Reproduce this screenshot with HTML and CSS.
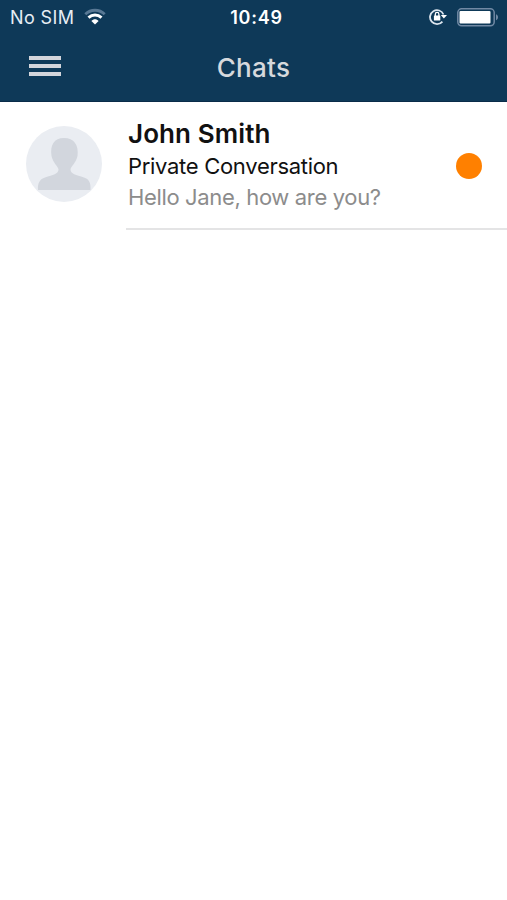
FILE: index.html
```html
<!DOCTYPE html>
<html lang="en">
<head>
  <meta charset="UTF-8">
  <meta name="viewport" content="width=device-width, initial-scale=1.0">
  <title>Chats</title>
  <link rel="stylesheet" href="styles.css">
</head>
<body>
  <header class="header">
    <!-- Status bar -->
    <div class="status-bar">
      <div class="status-left">
        <span class="carrier">No SIM</span>
        <svg class="wifi" width="22" height="18" viewBox="0 0 22 18" fill="none">
          <path d="M1.3 6.2C6.8 .9 15.2 .9 20.7 6.2" stroke="#587894" stroke-width="2.8"/>
          <path d="M4.5 9.6C8.3 6.2 13.7 6.2 17.5 9.6" stroke="#fff" stroke-width="3"/>
          <path d="M7.4 12.9C9.5 10.7 12.5 10.7 14.6 12.9L11 16.6Z" fill="#fff"/>
        </svg>
      </div>
      <span class="time">10:49</span>
      <div class="status-right">
        <svg width="18" height="18" viewBox="0 0 18 18" fill="none">
          <path d="M13.4 13.6A7 7 0 1 1 14.5 6.5" stroke="#dce5ee" stroke-width="1.8"/>
          <path d="M11.8 7H18L14.9 10.5Z" fill="#fff"/>
          <rect x="4.9" y="7.4" width="6.4" height="5.2" rx=".6" fill="#fff"/>
          <path d="M6.3 8V6.2a1.8 1.8 0 0 1 3.6 0V8" stroke="#fff" stroke-width="1.3"/>
        </svg>
        <svg width="42" height="19" viewBox="0 0 42 19" fill="none">
          <rect x=".8" y=".8" width="36.4" height="17" rx="3.8" stroke="#7189a4" stroke-width="1.5"/>
          <rect x="2.5" y="3" width="31" height="12.5" rx="1" fill="#fff"/>
          <path d="M39 6.3c2.7.7 2.700 5.300 0 6Z" fill="#7189a4"/>
        </svg>
      </div>
    </div>

    <!-- Navigation bar -->
    <nav class="navbar">
      <button class="menu-btn" aria-label="Menu">
        <span></span>
        <span></span>
        <span></span>
      </button>
      <h1>Chats</h1>
    </nav>
  </header>

  <main class="chat-list">
    <div class="chat">
      <svg class="avatar" width="76" height="76" viewBox="0 0 76 76">
        <circle cx="38" cy="38" r="38" fill="#eaedf2"/>
        <path d="M12 64C11.500 57 14 53 19 51.500C27 49 32.500 48 32.500 43.500C32 40 27.500 38 25.500 30C24 19 28 12 38 12C48 12 53 19 51.500 30C49.500 38 45 40 44.500 43.500C44.500 48 50 49 58 51.500C63 53 65 57 64.500 64Z" fill="#d2d6dd"/>
      </svg>
      <div class="chat-body">
        <div class="chat-text">
          <h2>John Smith</h2>
          <p class="type">Private Conversation</p>
          <p class="message">Hello Jane, how are you?</p>
        </div>
        <span class="unread"></span>
      </div>
    </div>
  </main>
</body>
</html>
```
FILE: styles.css
```css
* {
  box-sizing: border-box;
}

body {
  margin: 0;
  font-family: Inter, "Liberation Sans", sans-serif;
  background: #fff;
  color: #111;
}

h1, h2, p {
  margin: 0;
  white-space: nowrap;
}

.header {
  height: 102px;
  background: #0e3958;
  border-bottom: 1px solid #092b49;
}

.status-bar {
  display: grid;
  grid-template-columns: 1fr auto 1fr;
  align-items: center;
  height: 34px;
  padding: 0 8px 0 10px;
  color: #fff;
}

.status-left, .status-right {
  display: flex;
  align-items: center;
}

.status-left {
  gap: 10px;
}

.status-right {
  justify-content: flex-end;
  gap: 10px;
}

.carrier {
  font-size: 18px;
  letter-spacing: 0.4px;
  color: #e6edf4;
}

.time {
  padding-left: 4px;
  font-size: 18px;
  font-weight: 600;
  letter-spacing: 0.8px;
}

.navbar {
  display: grid;
  grid-template-columns: 1fr auto 1fr;
  align-items: center;
  height: 66px;
  padding: 0 29px;
}

.menu-btn {
  display: flex;
  flex-direction: column;
  gap: 4px;
  width: 32px;
  margin-bottom: 2px;
  padding: 0;
  border: none;
  background: none;
}

.menu-btn span {
  width: 32px;
  height: 4px;
  background: #d3d5db;
}

.navbar h1 {
  font-size: 26px;
  font-weight: 500;
  letter-spacing: 0.3px;
  color: #d6d9dd;
}

.chat {
  display: flex;
  gap: 24px;
  padding-left: 26px;
}

.avatar {
  flex: none;
  margin-top: 24px;
}

.chat-body {
  display: flex;
  flex: 1;
  justify-content: space-between;
  height: 128px;
  padding: 16px 25px 0 2px;
  border-bottom: 2px solid #e4e4e5;
}

.chat-text {
  line-height: 32px;
}

.chat-text h2 {
  font-size: 26px;
  font-weight: 600;
  letter-spacing: 0.1px;
}

.type {
  font-size: 22px;
  letter-spacing: -0.3px;
}

.message {
  margin-top: -1px;
  font-size: 22px;
  letter-spacing: -0.35px;
  color: #8c8c8c;
}

.unread {
  width: 26px;
  height: 26px;
  margin-top: 35px;
  border-radius: 50%;
  background: #ff8000;
}
```
